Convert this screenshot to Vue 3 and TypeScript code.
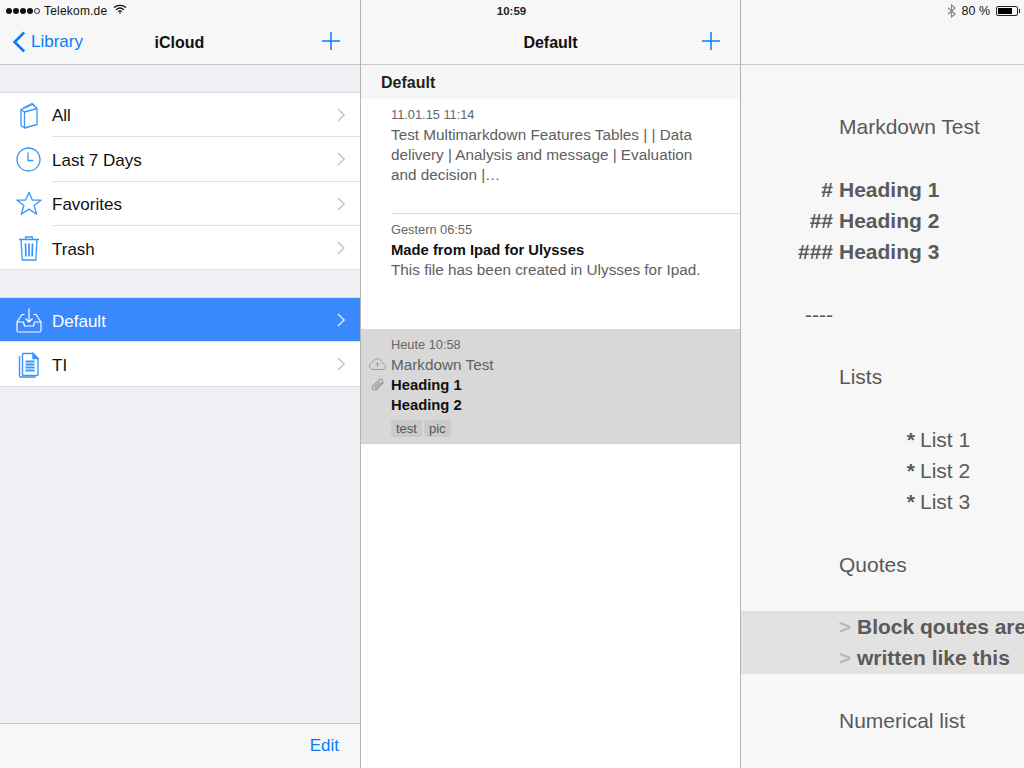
<script setup lang="ts">
type Folder = { name: string; icon: string }
type Line = { text?: string; mark?: string; kind?: string }

const topFolders: Folder[] = [
  { name: 'All', icon: 'book' },
  { name: 'Last 7 Days', icon: 'clock' },
  { name: 'Favorites', icon: 'star' },
  { name: 'Trash', icon: 'trash' },
]

const lines: Line[] = [
  { text: 'Markdown Test' },
  {},
  { text: 'Heading 1', mark: '#', kind: 'head' },
  { text: 'Heading 2', mark: '##', kind: 'head' },
  { text: 'Heading 3', mark: '###', kind: 'head' },
  {},
  { mark: '----', kind: 'rule' },
  {},
  { text: 'Lists' },
  {},
  { text: 'List 1', mark: '*', kind: 'item' },
  { text: 'List 2', mark: '*', kind: 'item' },
  { text: 'List 3', mark: '*', kind: 'item' },
  {},
  { text: 'Quotes' },
  {},
  { text: 'Block qoutes are', mark: '>', kind: 'quote' },
  { text: 'written like this', mark: '>', kind: 'quote' },
  {},
  { text: 'Numerical list' },
]
</script>

<template>
  <div class="ipad">
    <section class="col library">
      <header class="bar">
        <div class="status">
          <span class="dots"><i></i><i></i><i></i><i></i><i class="off"></i></span>
          <span class="carrier">Telekom.de</span>
          <svg class="wifi" width="14" height="10" viewBox="0 0 14 10" fill="none" stroke="#111" stroke-width="1.4">
            <path d="M1 3.6C4.400.6 9.600.6 13 3.600" />
            <path d="M3.200 5.700c2.200-1.900 5.400-1.900 7.600 0" />
            <path d="M5.200 7.600c1.100-.9 2.500-.9 3.600 0" />
            <path d="M7 10 5.900 8.800c.6-.5 1.600-.5 2.200 0z" fill="#111" stroke="none" />
          </svg>
        </div>
        <div class="nav">
          <a class="back">
            <svg width="14" height="22" viewBox="0 0 14 22" fill="none" stroke="#0b7bfb" stroke-width="2.6">
              <path d="M12.200 1.500 2.600 11l9.600 9.500" />
            </svg>
            Library
          </a>
          <span class="nav-title">iCloud</span>
          <svg class="plus" width="18" height="18" viewBox="0 0 18 18" stroke="#0b7bfb" stroke-width="1.5">
            <path d="M9 0v18M0 9h18" />
          </svg>
        </div>
      </header>

      <div class="folders">
        <div class="group">
          <div v-for="f in topFolders" :key="f.name" class="row">
            <span class="ico">
              <svg v-if="f.icon === 'book'" width="18" height="27" viewBox="0 0 18 27" fill="none" stroke="#3795fb" stroke-width="1.3" stroke-linejoin="round">
                <path d="M1 7.500v16l3.500 2.500V10z" />
                <path d="M4.500 10 17 6.500V22.500L4.500 26" />
                <path d="M1 7.500 13 2.500l4 4" />
                <path d="M3 6 12 1.500l2.500 2.500" />
              </svg>
              <svg v-else-if="f.icon === 'clock'" width="25" height="25" viewBox="0 0 25 25" fill="none" stroke="#3795fb" stroke-width="1.3">
                <circle cx="12.500" cy="12.500" r="11.500" />
                <path d="M12 5.500v8h5.500" />
              </svg>
              <svg v-else-if="f.icon === 'star'" width="26" height="25" viewBox="0 0 26 25" fill="none" stroke="#3795fb" stroke-width="1.3" stroke-linejoin="round">
                <path d="M13 1.200l3.400 8h8.600l-6.900 5.400 2.600 8.700-7.700-5.200-7.700 5.200 2.600-8.700L1 9.200h8.600z" />
              </svg>
              <svg v-else width="22" height="25" viewBox="0 0 22 25" fill="none" stroke="#3795fb" stroke-width="1.3">
                <path d="M1 3.500h20M7.500 3.500V1h7v2.500M3 3.500l1.200 20.500h13.600L19 3.500" stroke-linejoin="round" />
                <path d="M7.500 7.500l.4 13M11 7.500v13M14.500 7.500l-.4 13" stroke-width="1.700" />
              </svg>
            </span>
            <span class="label">{{ f.name }}</span>
            <svg class="chev" width="9" height="14" viewBox="0 0 9 14" fill="none" stroke="#c7c7cc" stroke-width="1.6">
              <path d="M1 1l6 6-6 6" />
            </svg>
          </div>
        </div>

        <div class="group second">
          <div class="row selected">
            <span class="ico">
              <svg width="26" height="25" viewBox="0 0 26 25" fill="none" stroke="#fff" stroke-width="1.2" stroke-linejoin="round">
                <path d="M8.500 6.500H6L1 14v8.500c0 .9.600 1.500 1.500 1.500h21c.9 0 1.500-.6 1.500-1.500V14l-5-7.500h-2.500" />
                <path d="M1 14h6.500l1 4h9l1-4H25" />
                <path d="M13 .5v13.500M9.500 10.500l3.500 3.500 3.500-3.500" />
              </svg>
            </span>
            <span class="label">Default</span>
            <svg class="chev" width="9" height="14" viewBox="0 0 9 14" fill="none" stroke="#d5e4fb" stroke-width="1.6">
              <path d="M1 1l6 6-6 6" />
            </svg>
          </div>
          <div class="row">
            <span class="ico">
              <svg width="21" height="26" viewBox="0 0 21 26" fill="none" stroke="#3795fb" stroke-width="1.4">
                <path d="M1.500 4v20c0 .6.400 1 1 1h15" />
                <path d="M4.500 2.500c0-.6.400-1 1-1H15l5 5v16c0 .6-.4 1-1 1H5.500c-.6 0-1-.4-1-1z" />
                <path d="M15 1.500l5 5h-5z" fill="#3795fb" />
                <path d="M7.500 9.500h9M7.500 12.500h9M7.500 15.500h9M7.500 18.500h9" stroke-width="1.800" />
              </svg>
            </span>
            <span class="label">TI</span>
            <svg class="chev" width="9" height="14" viewBox="0 0 9 14" fill="none" stroke="#c7c7cc" stroke-width="1.6">
              <path d="M1 1l6 6-6 6" />
            </svg>
          </div>
        </div>
      </div>

      <footer class="toolbar"><a>Edit</a></footer>
    </section>

    <section class="col sheets">
      <header class="bar">
        <div class="status center">10:59</div>
        <div class="nav">
          <span class="nav-title">Default</span>
          <svg class="plus" width="18" height="18" viewBox="0 0 18 18" stroke="#0b7bfb" stroke-width="1.5">
            <path d="M9 0v18M0 9h18" />
          </svg>
        </div>
      </header>

      <div class="section-title">Default</div>

      <article class="sheet first">
        <div class="date">11.01.15 11:14</div>
        <p>Test Multimarkdown Features Tables | | Data delivery | Analysis and message | Evaluation and decision |…</p>
      </article>

      <article class="sheet second-sheet">
        <div class="date">Gestern 06:55</div>
        <p class="strong">Made from Ipad for Ulysses</p>
        <p>This file has been created in Ulysses for Ipad.</p>
      </article>

      <article class="sheet active">
        <div class="side-icons">
          <svg width="17" height="12" viewBox="0 0 17 12" fill="none" stroke="#9a9a9a" stroke-width="1">
            <path d="M4.500 11.500h8.700c1.800 0 3.300-1.300 3.300-3 0-1.600-1.300-2.900-3-3C13 2.700 11 .8 8.600.8c-2 0-3.600 1.200-4.300 3C2.200 4 .5 5.700.5 7.700s1.700 3.800 4 3.800z" />
            <path d="M8.500 9V5M6.800 6.600l1.700-1.800 1.700 1.800" />
          </svg>
          <svg width="14" height="14" viewBox="0 0 14 14" fill="none" stroke="#a2a2a2" stroke-width="1.300">
            <path d="M12.500 4.500 6 11c-1.300 1.300-3 1.500-4 .5s-.8-2.700.5-4L8 2c1-1 2.300-1.200 3.100-.4.800.8.600 2.100-.4 3.100L5.800 9.600c-.5.500-1.100.6-1.500.2-.4-.4-.3-1 .2-1.500L8.700 4" />
          </svg>
        </div>
        <div class="date">Heute 10:58</div>
        <p>Markdown Test</p>
        <p class="strong">Heading 1</p>
        <p class="strong">Heading 2</p>
        <div class="tags"><span>test</span><span>pic</span></div>
      </article>
    </section>

    <section class="col editor">
      <header class="bar">
        <div class="status right">
          <svg width="9" height="14" viewBox="0 0 9 14" fill="none" stroke="#8a8a8a" stroke-width="1.200">
            <path d="M1 3.800l7 6.200-3.500 3V1L8 4 1 10.200" />
          </svg>
          <span class="pct">80 %</span>
          <span class="battery"><i></i></span>
        </div>
      </header>

      <div class="doc">
        <div v-for="(line, i) in lines" :key="i" class="line" :class="line.kind">
          <span class="mark">{{ line.mark }}</span>
          <span class="txt">{{ line.text }}</span>
        </div>
      </div>
    </section>
  </div>
</template>

<style>
html, body {
  margin: 0;
  background: #fff;
}
</style>

<style scoped>
.ipad {
  display: flex;
  width: 1024px;
  height: 768px;
  overflow: hidden;
  font-family: "Liberation Sans", Arial, sans-serif;
  color: #111;
}

.col {
  display: flex;
  flex-direction: column;
  box-sizing: border-box;
  height: 768px;
}

.library {
  width: 361px;
  background: #efeff4;
  border-right: 1px solid #b4b4b4;
}

.sheets {
  width: 380px;
  background: #fff;
  border-right: 1px solid #b4b4b4;
}

.editor {
  width: 283px;
  background: #f7f7f7;
}

.bar {
  flex: none;
  height: 65px;
  box-sizing: border-box;
  background: #f7f7f7;
  border-bottom: 1px solid #c8c8c8;
}

.status {
  display: flex;
  align-items: center;
  height: 21px;
  padding-left: 6px;
  font-size: 12px;
}

.status.center {
  justify-content: center;
  padding: 0 78px 0 0;
  font-weight: bold;
  font-size: 11.500px;
  color: #222;
}

.status.right {
  justify-content: flex-end;
  padding: 0 6px 0 0;
}

.dots {
  display: flex;
  gap: 1px;
}

.dots i {
  width: 6px;
  height: 6px;
  border-radius: 50%;
  background: #111;
}

.dots i.off {
  box-sizing: border-box;
  background: none;
  border: 1px solid #333;
}

.carrier {
  margin-left: 4px;
  letter-spacing: 0.2px;
}

.wifi {
  margin-left: 6px;
  margin-top: -3px;
}

.pct {
  margin: 0 6px 0 6px;
  font-size: 12.500px;
}

.battery {
  position: relative;
  display: block;
  box-sizing: border-box;
  width: 22px;
  height: 10px;
  padding: 1px;
  border: 1px solid #222;
  border-radius: 2px;
}

.battery i {
  display: block;
  width: 80%;
  height: 100%;
  background: #000;
}

.battery::after {
  content: "";
  position: absolute;
  right: -3px;
  top: 2px;
  width: 1px;
  height: 4px;
  background: #222;
}

.nav {
  position: relative;
  display: flex;
  align-items: center;
  justify-content: center;
  height: 43px;
}

.nav-title {
  font-size: 16px;
  font-weight: bold;
}

.library .nav-title {
  margin-right: 1px;
}

.back {
  position: absolute;
  left: 12px;
  top: 10px;
  display: flex;
  align-items: center;
  gap: 5px;
  color: #0b7bfb;
  font-size: 17px;
}

.plus {
  position: absolute;
  right: 20px;
  top: 11px;
}

.folders {
  flex: 1;
  padding-top: 27px;
}

.group {
  background: #fff;
  border-top: 1px solid #dcdcdf;
}

.group.second {
  margin-top: 27px;
}

.row {
  position: relative;
  display: flex;
  align-items: center;
  box-sizing: border-box;
  height: 44.300px;
  padding: 4px 0 0 52px;
  font-size: 17px;
  border-bottom: 1px solid #dfdfe2;
}

.group:first-child .row:first-child {
  padding-top: 2px;
}

.row::after {
  content: "";
  position: absolute;
  left: 0;
  bottom: -1px;
  width: 52px;
  border-bottom: 1px solid #fff;
}

.group .row:last-child::after,
.row.selected::after {
  display: none;
}

.row.selected {
  background: #3a88fd;
  color: #fff;
  border-bottom-color: #d6e6fe;
}

.ico {
  position: absolute;
  left: 15px;
  top: 1px;
  bottom: 0;
  width: 27px;
  display: flex;
  align-items: center;
  justify-content: center;
}

.chev {
  position: absolute;
  right: 14px;
  top: 15px;
}

.toolbar {
  flex: none;
  height: 45px;
  display: flex;
  align-items: center;
  justify-content: flex-end;
  box-sizing: border-box;
  padding-right: 21px;
  background: #f7f7f7;
  border-top: 1px solid #c8c8c8;
  color: #0b7bfb;
  font-size: 17px;
}

.section-title {
  height: 34px;
  padding: 1px 0 0 20px;
  box-sizing: border-box;
  background: #f6f6f6;
  font-size: 16px;
  font-weight: bold;
  line-height: 34px;
  color: #222;
}

.sheet {
  position: relative;
  box-sizing: border-box;
  padding: 9px 44px 0 30px;
  font-size: 15.300px;
  line-height: 20px;
  color: #606060;
}

.sheet p {
  margin: 0;
}

.sheet.first {
  height: 114px;
}

.sheet.second-sheet {
  height: 116px;
  border-top: 1px solid #dcdcdc;
  margin-left: 30px;
  padding: 9px 20px 0 0;
}

.sheet.active {
  height: 115px;
  background: #d8d8d8;
  border-bottom: 1px solid #cfcfcf;
}

.date {
  font-size: 12.800px;
  line-height: 14px;
  margin-bottom: 3px;
  color: #666;
}

.strong {
  font-size: 14.800px;
  font-weight: bold;
  color: #111;
}

.side-icons {
  position: absolute;
  left: 8px;
  top: 29px;
  display: flex;
  flex-direction: column;
  align-items: center;
  gap: 8px;
}

.tags {
  display: flex;
  gap: 2px;
  margin-top: 5px;
}

.tags span {
  padding: 0 5px;
  height: 17px;
  line-height: 17px;
  font-size: 13px;
  background: #cacaca;
  border-radius: 2px;
  color: #555;
}

.doc {
  padding-top: 46px;
  color: #5a5a5a;
  font-size: 21px;
}

.line {
  display: flex;
  height: 31.250px;
  line-height: 31.250px;
  white-space: nowrap;
}

.mark {
  flex: none;
  width: 92px;
  margin-right: 6px;
  text-align: right;
}

.line.head,
.line.quote {
  font-weight: bold;
}

.line.item .mark {
  width: 174px;
  margin-right: 5px;
  font-weight: bold;
}

.line.quote {
  background: #e2e2e2;
}

.line.quote .mark {
  width: 110px;
  color: #b8b8b8;
}
</style>
